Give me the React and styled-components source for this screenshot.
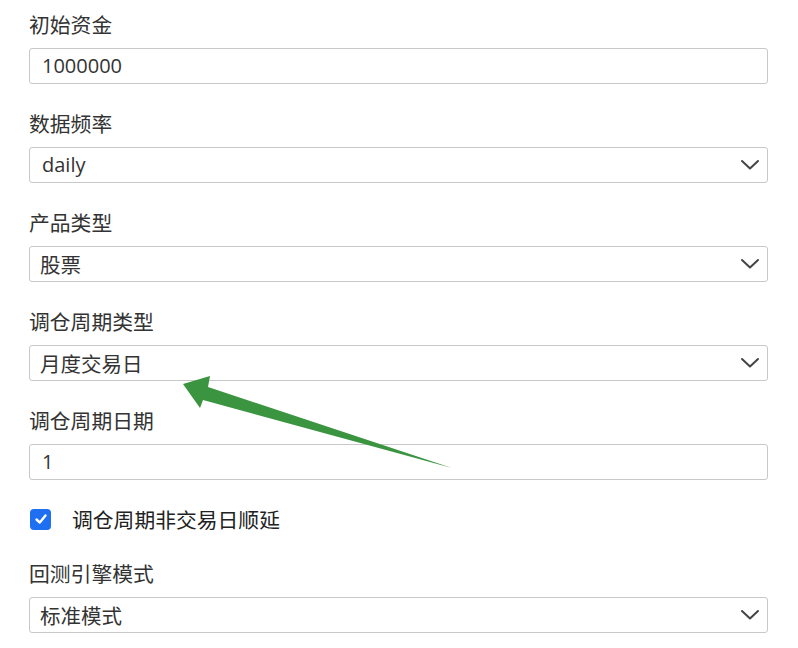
import React from "react";
import styled, { createGlobalStyle } from "styled-components";

const Global = createGlobalStyle`
  html, body { margin: 0; padding: 0; background: #fff; }
  body { font-family: "Open Sans", "Noto Sans CJK SC", sans-serif; color: #333; }
  * { box-sizing: border-box; }
`;

const Page = styled.div`
  position: relative;
  width: 798px;
  height: 648px;
  padding: 9px 0 0 29px;
  overflow: hidden;
`;

const Form = styled.div`
  width: 739px;
  display: flex;
  flex-direction: column;
`;

const Group = styled.div`
  display: flex;
  flex-direction: column;
  margin-bottom: 24px;
`;

const Label = styled.label`
  font-family: "Noto Sans CJK SC", sans-serif;
  font-size: 20.8px;
  line-height: 30px;
  height: 30px;
  margin-bottom: 9px;
  color: #333;
`;

const Field = styled.div`
  position: relative;
  height: 36px;
  border: 1px solid #c8c8c8;
  border-radius: 3px;
  background: #fff;
  display: flex;
  align-items: center;
  padding: 0 10px;
  font-size: 20px;
  color: #333;
`;

const Value = styled.span`
  line-height: 34px;
  font-family: ${(p) => (p.$cjk ? '"Noto Sans CJK SC", sans-serif' : '"Open Sans", "Noto Sans CJK SC", sans-serif')};
  font-size: ${(p) => (p.$cjk ? 20.5 : 20)}px;
  padding-left: ${(p) => (p.$cjk ? 0 : 2)}px;
`;

const Chevron = styled.svg`
  position: absolute;
  right: 7px;
  top: 50%;
  transform: translateY(-50%);
`;

const CheckRow = styled.div`
  display: flex;
  align-items: center;
  height: 30px;
  margin-bottom: 24px;
  padding-left: 1px;
  gap: 21px;
`;

const Box = styled.span`
  width: 21px;
  height: 21px;
  border-radius: 4px;
  background: #1f6ff2;
  display: flex;
  align-items: center;
  justify-content: center;
`;

const CheckText = styled.span`
  font-family: "Noto Sans CJK SC", sans-serif;
  font-size: 20.8px;
  color: #222;
`;

const Overlay = styled.svg`
  position: absolute;
  left: 0;
  top: 0;
  pointer-events: none;
`;

const ChevronIcon = () => (
  <Chevron width="20" height="12" viewBox="0 0 20 12">
    <path d="M2 2 L10 9.5 L18 2" fill="none" stroke="#444" strokeWidth="2" strokeLinecap="round" strokeLinejoin="round" />
  </Chevron>
);

function TextField({ label, value }) {
  return (
    <Group>
      <Label>{label}</Label>
      <Field>
        <Value>{value}</Value>
      </Field>
    </Group>
  );
}

function SelectField({ label, value, cjk }) {
  return (
    <Group>
      <Label>{label}</Label>
      <Field>
        <Value $cjk={cjk}>{value}</Value>
        <ChevronIcon />
      </Field>
    </Group>
  );
}

export default function App() {
  return (
    <>
      <Global />
      <Page>
        <Form>
          <TextField label="初始资金" value="1000000" />
          <SelectField label="数据频率" value="daily" />
          <SelectField label="产品类型" value="股票" cjk />
          <SelectField label="调仓周期类型" value="月度交易日" cjk />
          <TextField label="调仓周期日期" value="1" />
          <CheckRow>
            <Box>
              <svg width="14" height="14" viewBox="0 0 14 14">
                <path d="M2.5 7.5 L5.8 10.5 L11.5 3.5" fill="none" stroke="#fff" strokeWidth="2.4" strokeLinecap="round" strokeLinejoin="round" />
              </svg>
            </Box>
            <CheckText>调仓周期非交易日顺延</CheckText>
          </CheckRow>
          <SelectField label="回测引擎模式" value="标准模式" cjk />
        </Form>
        <Overlay width="798" height="648" viewBox="0 0 798 648">
          <polygon
            points="183,384 210,376 208,387 452,468 203,400 200,408"
            fill="#3a9440"
          />
        </Overlay>
      </Page>
    </>
  );
}
